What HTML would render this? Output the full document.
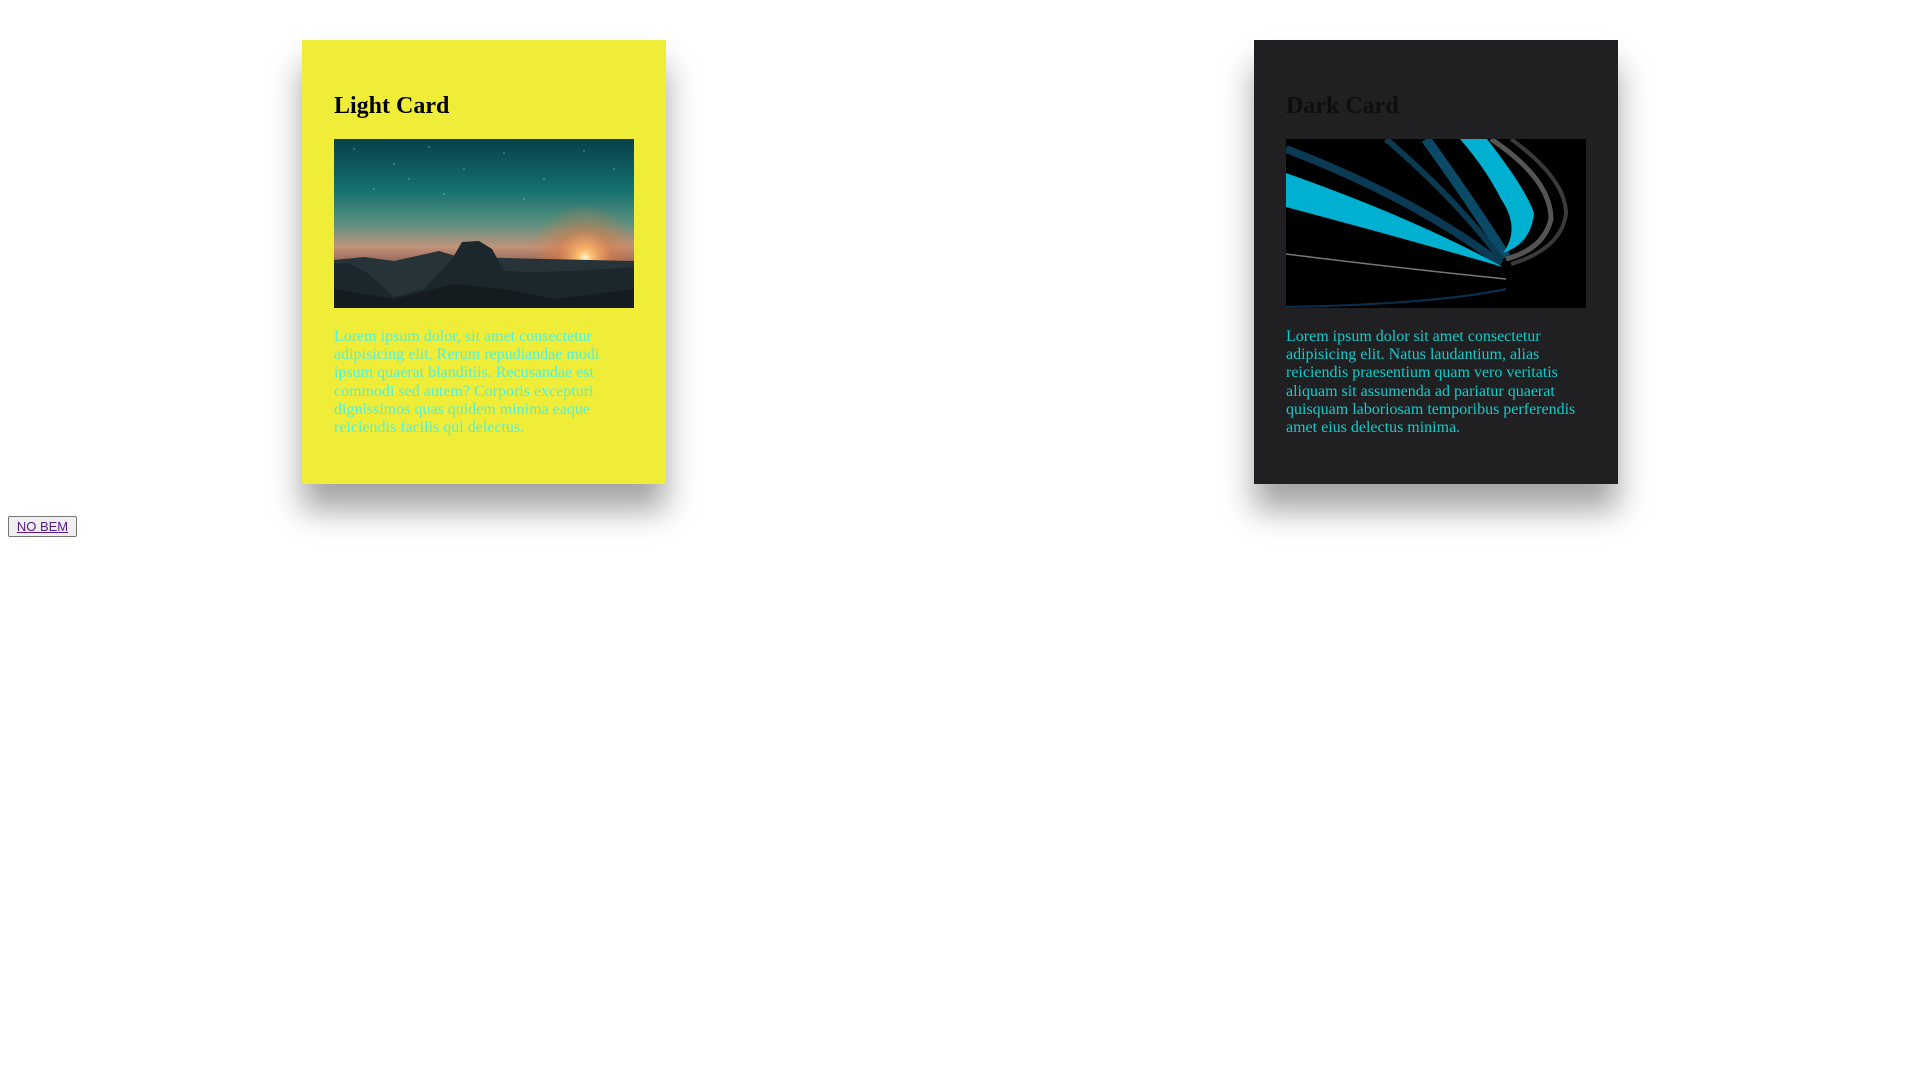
<!DOCTYPE html>
<html><head><meta charset="utf-8"><style>
html,body{margin:0;padding:0;background:#fff;width:1920px;height:1080px;overflow:hidden;font-family:"Liberation Serif",serif}
.card{position:absolute;top:40px;width:300px;height:380px;padding:32px;box-shadow:0 26px 30px rgba(0,0,0,.36)}
.light{left:302px;background:#efed37}
.dark{left:1254px;background:#201f22}
h2{margin:0;position:absolute;left:32px;top:52px;font-size:24px;font-weight:bold;line-height:28px}
.light h2{color:#000}.dark h2{color:#0e0d0f}
svg{position:absolute;left:32px;top:99px;display:block}
p{position:absolute;left:32px;top:288px;width:300px;margin:0;font-size:16px;line-height:18.2px}
.light p{color:#52f0dc}.dark p{color:#12cccc}
.btn{position:absolute;left:8px;top:516px;width:69px;height:21px;box-sizing:border-box;border:1px solid #767676;border-radius:2px;background:#efefef;font-family:"Liberation Sans",sans-serif;font-size:13px;text-align:center;line-height:19px}
.btn a{color:#551a8b;text-decoration:underline}
</style></head><body>
<div class="card light">
<h2>Light Card</h2>
<svg width="300" height="169" viewBox="0 0 300 169">
<defs>
<linearGradient id="sky" x1="0" y1="0" x2="0" y2="1">
<stop offset="0" stop-color="#08404a"/><stop offset=".3" stop-color="#14706e"/><stop offset=".5" stop-color="#5a9080"/><stop offset=".64" stop-color="#c2927a"/><stop offset=".78" stop-color="#7a4e44"/><stop offset="1" stop-color="#302424"/></linearGradient>
<radialGradient id="sun" cx="251" cy="119" r="55" gradientUnits="userSpaceOnUse"><stop offset="0" stop-color="#fff8e0"/><stop offset=".12" stop-color="#ffc070"/><stop offset=".5" stop-color="#e07a40" stop-opacity=".5"/><stop offset="1" stop-color="#e07a40" stop-opacity="0"/></radialGradient>
</defs>
<rect width="300" height="169" fill="url(#sky)"/>
<rect width="300" height="169" fill="url(#sun)"/>
<g fill="#fff" opacity=".7"><circle cx="20" cy="10" r=".6"/><circle cx="60" cy="25" r=".6"/><circle cx="95" cy="8" r=".6"/><circle cx="130" cy="30" r=".6"/><circle cx="170" cy="14" r=".6"/><circle cx="210" cy="40" r=".6"/><circle cx="250" cy="12" r=".6"/><circle cx="280" cy="30" r=".6"/><circle cx="40" cy="50" r=".6"/><circle cx="110" cy="55" r=".6"/><circle cx="190" cy="60" r=".6"/><circle cx="75" cy="40" r=".6"/></g>
<path d="M0 121 L30 118 L60 122 L105 112 L125 118 L300 122 L300 169 L0 169Z" fill="#26343a"/>
<path d="M0 125 L15 124 L35 135 L60 158 L90 150 L118 120 L128 103 L145 102 L158 110 L170 132 L200 133 L240 132 L300 128 L300 169 L0 169Z" fill="#1b272c"/>
<path d="M0 150 L60 160 L120 145 L170 150 L220 160 L300 150 L300 169 L0 169Z" fill="#141c20"/>
</svg>
<p>Lorem ipsum dolor, sit amet consectetur adipisicing elit. Rerum repudiandae modi ipsum quaerat blanditiis. Recusandae est commodi sed autem? Corporis excepturi dignissimos quas quidem minima eaque reiciendis facilis qui delectus.</p>
</div>
<div class="card dark">
<h2>Dark Card</h2>
<svg width="300" height="169" viewBox="0 0 300 169">
<rect width="300" height="169" fill="#000"/>
<path d="M140 0 Q190 70 220 118" stroke="#0b4a66" stroke-width="10" fill="none"/>
<path d="M100 0 Q170 60 215 120" stroke="#0a3a50" stroke-width="6" fill="none"/>
<path d="M0 10 Q130 60 215 125" stroke="#0b3a55" stroke-width="8" fill="none"/>
<path d="M0 34 L0 68 Q120 100 217 128 Q130 80 0 34Z" fill="#00b0d0"/>
<path d="M174 0 L201 0 Q240 50 248 74 Q245 105 217 114 Q235 90 215 60 Q200 30 174 0Z" fill="#00b0d0"/>
<path d="M205 0 Q265 40 265 80 Q258 110 220 120" stroke="#555" stroke-width="5" fill="none"/>
<path d="M225 0 Q280 40 280 75 Q275 110 225 125" stroke="#3a3a3a" stroke-width="4" fill="none"/>
<path d="M0 115 Q120 130 220 140" stroke="#777" stroke-width="1.5" fill="none"/>
<path d="M0 168 Q150 165 220 150" stroke="#0a3050" stroke-width="2" fill="none"/>
</svg>
<p>Lorem ipsum dolor sit amet consectetur adipisicing elit. Natus laudantium, alias reiciendis praesentium quam vero veritatis aliquam sit assumenda ad pariatur quaerat quisquam laboriosam temporibus perferendis amet eius delectus minima.</p>
</div>
<div class="btn"><a>NO BEM</a></div>
</body></html>
